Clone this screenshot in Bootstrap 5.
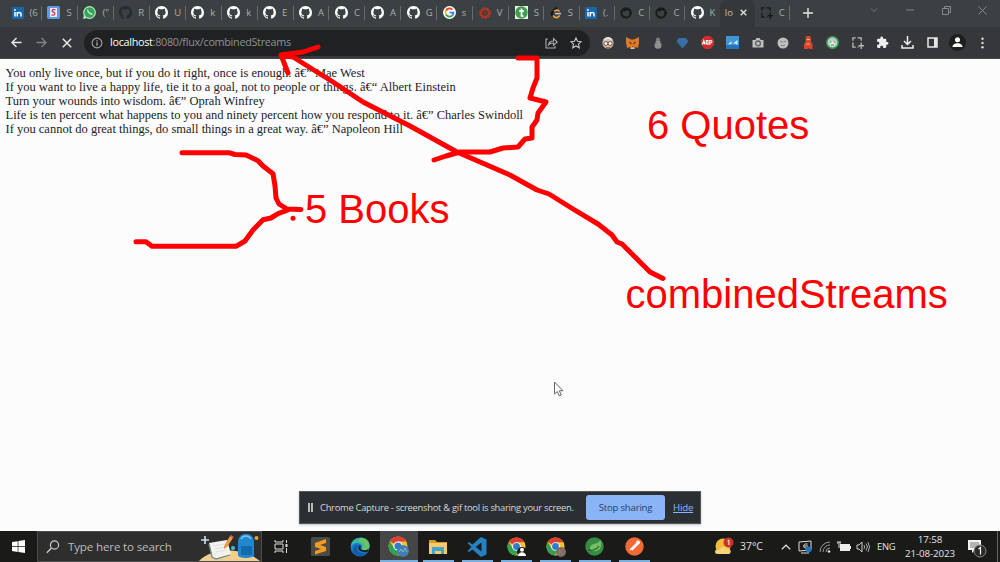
<!DOCTYPE html>
<html lang="en">
<head>
<meta charset="utf-8">
<title>localhost:8080/flux/combinedStreams</title>
<link href="https://cdn.jsdelivr.net/npm/bootstrap@5.3.0/dist/css/bootstrap.min.css" rel="stylesheet">
<script src="https://cdn.jsdelivr.net/npm/bootstrap@5.3.0/dist/js/bootstrap.bundle.min.js"></script>
<style>
body{width:1000px;height:562px;overflow:hidden;background:#fdfcfd;font-family:"Open Sans","Noto Sans",sans-serif;font-size:11px;line-height:1}
svg{display:block;flex:none}
.tabstrip{height:27px;background:#3b4143;color:#a9adae;padding-left:6px}
.btab{width:35.95px;height:27px;padding:0 0 2px 5.5px;gap:6px;font-size:9.5px;line-height:14px;position:relative}
.btab.late{width:35.2px}
.btab::after{content:"";position:absolute;right:0;top:6px;width:1px;height:14px;background:#666b6c}
.btab.plain::after{display:none}
.btab span{white-space:nowrap}
.btab.current{width:35px;background:#35383a;border-radius:7px 7px 0 0;padding-left:4.5px;gap:6px;color:#bbb}
.btab.current span{width:9px}
.winbtns span{width:36px;height:20px}
.toolbar{height:32px;background:#35373a;border-bottom:1px solid #4a4a4b}
.nav3{width:84px;padding-left:4px}
.nav3 span,.exts span{width:25px;height:30px}
.pill{width:506px;height:26px;background:#202122;color:#8e9194;border-radius:13px;padding:0 6px 0 7px}
.pill .url{font-size:10.8px;letter-spacing:-.29px;white-space:nowrap;margin-left:7px}
.exts{padding-left:5px}
.quotes{font-family:"Liberation Serif",serif;font-size:12.5px;line-height:14px;color:#222;padding:7px 0 0 5.5px;height:472px;white-space:nowrap}
.mono-q{width:max-content}
.sharebar{left:299px;top:491px;width:402px;height:33px;background:#2c2f32;border:1px solid #55585a;color:#d5d7d9;padding-left:8px;font-size:9.7px;white-space:nowrap;box-shadow:0 1px 2px #9999}
.sharebar .msg{font-size:9.4px;letter-spacing:-.28px;line-height:14px;margin-left:7px;width:266px}
.sharebar .btn{width:79px;height:25px;background:#8ab4f8;color:#263f66;font-size:9.6px;letter-spacing:-.2px;border-radius:3px;padding:0;line-height:25px}
.sharebar a{color:#8ab4f8;letter-spacing:-.2px}
.taskbar{height:31px;background:#1a1b19;color:#e2e2e2}
.searchbox{width:225px;height:31px;background:#2d2e2d;border:1px solid #4c4d4c;color:#bcbcbc;font-size:11.6px;letter-spacing:-.16px}
.app{width:39.2px;height:31px;position:relative}
.app.run::after{content:"";position:absolute;left:4px;right:4px;bottom:0;height:2px;background:#76afe0}
.app.front{background:#454647;width:38px;margin-right:1px}
.app.front::after{left:0;right:0}
.clock{width:66px;font-size:9.8px;line-height:14px;text-align:center;letter-spacing:-.1px}
.overlay{left:0;top:0;pointer-events:none}
.overlay text{font:40px "Liberation Sans",sans-serif;fill:#f00}
</style>
</head>
<body>
<svg width="0" height="0" class="position-absolute">
<defs>
<symbol id="gh" viewBox="0 0 16 16"><path fill="currentColor" d="M8 0C3.58 0 0 3.58 0 8c0 3.54 2.29 6.53 5.47 7.59.4.07.55-.17.55-.38v-1.49c-2 .37-2.53-.49-2.69-.94-.09-.23-.48-.94-.82-1.13-.28-.15-.68-.52-.01-.53.63-.01 1.08.58 1.23.82.72 1.21 1.87.87 2.33.66.07-.52.28-.87.51-1.07-1.78-.2-3.64-.89-3.64-3.95 0-.87.31-1.59.82-2.15-.08-.2-.36-1.02.08-2.12 0 0 .67-.21 2.2.82a7.6 7.6 0 0 1 4 0c1.53-1.04 2.2-.82 2.2-.82.44 1.1.16 1.92.08 2.12.51.56.82 1.27.82 2.15 0 3.07-1.87 3.75-3.65 3.95.29.25.54.73.54 1.48v2.2c0 .21.15.46.55.38A8 8 0 0 0 16 8c0-4.42-3.58-8-8-8z"/></symbol>
<symbol id="in" viewBox="0 0 12 12"><rect width="12" height="12" rx="1" fill="#1667ae"/><path d="M3 5v4.6M5.3 9.6V5M5.3 7c0-2 3.7-2.2 3.7 0v2.6" stroke="#fff" stroke-width="1.5" fill="none"/><circle cx="3" cy="3" r=".9" fill="#fff"/></symbol>
<symbol id="chrome" viewBox="0 0 20 20"><circle cx="10" cy="10" r="9.5" fill="#f7c52d"/><path d="M10 10 1.8 5.2A9.5 9.5 0 0 1 18.3 5.5H10z" fill="#dd4033"/><path d="M1.8 5.2A9.5 9.5 0 0 0 9.3 19.5L13.7 12 10 10 6 12z" fill="#30a152"/><circle cx="10" cy="10" r="4.6" fill="#fff"/><circle cx="10" cy="10" r="3.6" fill="#2f7ccc"/></symbol>
<symbol id="ring" viewBox="0 0 12 12"><circle cx="6" cy="6" r="4.700" stroke="#1b1e1f" stroke-width="2.200" fill="none"/><path d="M4 4.500A3 3 0 0 1 9 3.500M9 6h3" stroke="#17191a" stroke-width="1.600" fill="none"/></symbol>
<symbol id="crop" viewBox="0 0 13 13"><path d="M1 4V1h3M6 1h2M10 4V1H8M1 6v2M1 8v3h3M6 11h1M10 6v7M7 9.5h6" fill="none" stroke="currentColor" stroke-width="1.4"/></symbol>
</defs>
</svg>

<header>
<div class="tabstrip d-flex">
<div class="btab d-flex align-items-center"><svg width="12" height="12"><use href="#in"/></svg><span>(‌6</span></div>
<div class="btab d-flex align-items-center"><svg width="13" height="13" viewBox="0 0 13 13"><rect width="13" height="13" rx="2" fill="#5b9bdf"/><rect x="3" y="2" width="7" height="9" fill="#e4eefb"/><path d="M8.5 4C5 2.5 4 5.5 6.5 6.2S8 10 4.500 8.800" stroke="#c53f54" stroke-width="1.300" fill="none"/></svg><span>S</span></div>
<div class="btab d-flex align-items-center"><svg width="13" height="13" viewBox="0 0 13 13"><circle cx="6.500" cy="6.500" r="6.400" fill="#bfe2c5"/><path d="m0 13 1-4 3 3z" fill="#bfe2c5"/><circle cx="6.500" cy="6.500" r="5.200" fill="#2fa84f"/><path d="M4 3.500c0 3 2.500 5.500 5.500 5.500V7.500L8 7 5.500 5 5.500 3.500z" fill="#b7d7e2"/></svg><span>("</span></div>
<div class="btab d-flex align-items-center"><svg width="13" height="13" color="#25292b"><use href="#gh"/></svg><span>R</span></div>
<div class="btab d-flex align-items-center"><svg width="13" height="13" color="#fff"><use href="#gh"/></svg><span>U</span></div>
<div class="btab d-flex align-items-center"><svg width="13" height="13" color="#fff"><use href="#gh"/></svg><span>k</span></div>
<div class="btab d-flex align-items-center"><svg width="13" height="13" color="#fff"><use href="#gh"/></svg><span>k</span></div>
<div class="btab d-flex align-items-center"><svg width="13" height="13" color="#fff"><use href="#gh"/></svg><span>E</span></div>
<div class="btab d-flex align-items-center"><svg width="13" height="13" color="#fff"><use href="#gh"/></svg><span>A</span></div>
<div class="btab d-flex align-items-center"><svg width="13" height="13" color="#fff"><use href="#gh"/></svg><span>C</span></div>
<div class="btab d-flex align-items-center"><svg width="13" height="13" color="#fff"><use href="#gh"/></svg><span>A</span></div>
<div class="btab d-flex align-items-center"><svg width="13" height="13" color="#fff"><use href="#gh"/></svg><span>G</span></div>
<div class="btab d-flex align-items-center"><svg width="13" height="13" viewBox="0 0 13 13"><circle cx="6.500" cy="6.500" r="6.500" fill="#fff"/><g fill="none" stroke-width="1.800"><path d="M9.300 3.600A4 4 0 0 0 3 4.500" stroke="#e34133"/><path d="M3 4.500a4 4 0 0 0 0 4" stroke="#f4b71c"/><path d="M3 8.500a4 4 0 0 0 6 1.200" stroke="#31a350"/><path d="M9 9.700a4 4 0 0 0 1.500-3.100h-4" stroke="#3f7eea"/></g></svg><span>s</span></div>
<div class="btab d-flex align-items-center"><svg width="12" height="12" viewBox="0 0 12 12"><circle cx="6" cy="6" r="4" fill="none" stroke="#a93424" stroke-width="2.500"/><circle cx="6" cy="6" r="5.300" fill="none" stroke="#c23d29" stroke-dasharray="2 1.300"/><circle cx="6" cy="6" r="1.500" fill="#7c3026"/></svg><span>V</span></div>
<div class="btab late d-flex align-items-center"><svg width="13" height="13" viewBox="0 0 13 13"><path d="M0 0h13v13H0z" fill="#e9f4ea"/><circle cx="6.500" cy="6.500" r="6.200" fill="#3e9f4d"/><path d="M6.500 2.500v7q0 1 2 .5M4.300 5h4.500" stroke="#fff" stroke-width="1.800" fill="none"/></svg><span>S</span></div>
<div class="btab late d-flex align-items-center"><svg width="12" height="12" viewBox="0 0 12 12"><path d="M7 .5 2 5.500c-1 1-.5 2 1 3.800" stroke="#121314" stroke-width="2" fill="none"/><path d="M4 4.500c2-2 4-1.500 5.500 0M3 8.500c2 3 5 2.500 6.500 0" stroke="#eaa43a" stroke-width="1.700" fill="none"/><path d="M5 6.600h6" stroke="#c5c5c5" stroke-width="1.500"/></svg><span>S</span></div>
<div class="btab late d-flex align-items-center"><svg width="12" height="12"><use href="#in"/></svg><span>(.</span></div>
<div class="btab late d-flex align-items-center"><svg width="12" height="12"><use href="#ring"/></svg><span>C</span></div>
<div class="btab late d-flex align-items-center"><svg width="12" height="12"><use href="#ring"/></svg><span>C</span></div>
<div class="btab late plain d-flex align-items-center"><svg width="13" height="13" color="#fff"><use href="#gh"/></svg><span>K</span></div>
<div class="btab current plain d-flex align-items-center"><span>lo</span><svg width="7" height="7" viewBox="0 0 7 7"><path d="m.7.7 5.600 5.600M6.300.7.700 6.300" stroke="#ddd" stroke-width="1.400"/></svg></div>
<div class="btab late d-flex align-items-center"><svg width="12" height="12" color="#171a1b"><use href="#crop"/></svg><span>C</span></div>
<div class="d-flex align-items-center justify-content-center" style="width:36px;padding-bottom:1px"><svg width="10" height="10" viewBox="0 0 10 10"><path d="M5 0v10M0 5h10" stroke="#e6e6e6" stroke-width="1.400"/></svg></div>
<div class="winbtns d-flex ms-auto">
<span class="d-flex align-items-center justify-content-center"><svg width="8" height="5" viewBox="0 0 8 5"><path d="m1 .5 3 3 3-3" stroke="#6f7577" fill="none"/></svg></span>
<span class="d-flex align-items-center justify-content-center"><svg width="8" height="2"><path d="M0 1h8" stroke="#7f8587"/></svg></span>
<span class="d-flex align-items-center justify-content-center"><svg width="9" height="9" viewBox="0 0 9 9"><path d="M.5 2.500h6v6h-6zM2.500 2V.5h6v6H7" stroke="#858b8d" fill="none"/></svg></span>
<span class="d-flex align-items-center justify-content-center"><svg width="9" height="9" viewBox="0 0 9 9"><path d="m.5.5 8 8M8.500.5l-8 8" stroke="#858b8d"/></svg></span>
</div>
</div>

<div class="toolbar d-flex align-items-center">
<div class="nav3 d-flex">
<span class="d-flex align-items-center justify-content-center"><svg width="11" height="11" viewBox="0 0 11 11"><path d="M10.500 5.500H1M5.500 1 1 5.500 5.500 10" stroke="#e8eaeb" stroke-width="1.400" fill="none"/></svg></span>
<span class="d-flex align-items-center justify-content-center"><svg width="11" height="11" viewBox="0 0 11 11"><path d="M.5 5.500H10M5.500 1 10 5.500 5.500 10" stroke="#808486" stroke-width="1.300" fill="none"/></svg></span>
<span class="d-flex align-items-center justify-content-center"><svg width="10" height="10" viewBox="0 0 10 10"><path d="m.8.8 8.400 8.400M9.200.8.800 9.200" stroke="#e8eaeb" stroke-width="1.500"/></svg></span>
</div>
<div class="pill d-flex align-items-center">
<svg width="12" height="12" viewBox="0 0 12 12"><circle cx="6" cy="6" r="4.900" fill="none" stroke="#a4a6a8" stroke-width="1.100"/><path d="M6 5.300v3.400M6 3.200v1.300" stroke="#b4b6b8" stroke-width="1.200"/></svg>
<span class="url"><span class="text-white">localhost</span>:8080/flux/combinedStreams</span>
<svg class="ms-auto" width="13" height="12" viewBox="0 0 13 12"><path d="M3 2H1v9h9V9M3.500 8c.4-3 2.500-4 5-4V1.500L12.200 5 8.500 8.200V6c-2 0-3.600.4-5 2z" stroke="#a9abad" stroke-width="1.100" fill="none"/></svg>
<svg style="margin:0 2px 0 12px" width="12" height="12" viewBox="0 0 12 12"><path d="m6 .9 1.500 3.300 3.700.4-2.700 2.500.8 3.700L6 8.900l-3.300 1.900.8-3.700L.8 4.600l3.700-.4z" stroke="#c5c7c9" stroke-width="1.100" fill="none"/></svg>
</div>
<div class="exts d-flex">
<span class="d-flex align-items-center justify-content-center"><svg width="12" height="12" viewBox="0 0 12 12"><circle cx="6" cy="6" r="5.600" fill="#c9bda9"/><path d="M2 3Q6-1 10 3" stroke="#e9e4da" stroke-width="2" fill="none"/><circle cx="3.800" cy="6.500" r="2" fill="#eee" stroke="#655c53"/><circle cx="8.200" cy="6.500" r="2" fill="#eee" stroke="#655c53"/><path d="M4 10.500h4" stroke="#c95a3c"/></svg></span>
<span class="d-flex align-items-center justify-content-center"><svg width="13" height="12" viewBox="0 0 13 12"><path d="m0 0 5 2.500h3L13 0v6l-1 5-3-1-1 1.500H5L4 10l-3 1-1-5z" fill="#dd7a25"/><path d="m3.500 5 2 2M9.500 5l-2 2M6 9.500h1" stroke="#733a16" stroke-width="1.200"/><path d="M4.500 10.500h4v1.500h-4z" fill="#d6c6b7"/></svg></span>
<span class="d-flex align-items-center justify-content-center"><svg width="8" height="12" viewBox="0 0 8 12"><circle cx="4" cy="2.700" r="2.200" fill="#777a7b"/><path d="M1.500 4.500h5v1h-5z" fill="#c7c7c7"/><ellipse cx="4" cy="8.500" rx="3.500" ry="3.200" fill="#8e9192"/></svg></span>
<span class="d-flex align-items-center justify-content-center"><svg width="13" height="12" viewBox="0 0 13 12"><path d="M2.500 1h7.500l2.500 3.500-6 7-6-7z" fill="#366fa5"/></svg></span>
<span class="d-flex align-items-center justify-content-center"><svg width="13" height="13" viewBox="0 0 13 13"><path d="M4 0h5l4 4v5l-4 4H4L0 9V4z" fill="#d5292d"/><path d="m1.500 8.500 1.300-4 1.300 4M2 7.200h1.800M5.300 8V4.500H7v3.700H5.300M8.700 9V4.500q2.500-.2 2.200 1.300t-2.200 1" stroke="#fff" stroke-width="1.100" fill="none"/></svg></span>
<span class="d-flex align-items-center justify-content-center"><svg width="13" height="13" viewBox="0 0 13 13"><rect width="13" height="13" fill="#3f96d6"/><path d="M0 9h13v4H0z" fill="#2774b8"/><path d="M2 8.500 5.500 5v3zM7 7.500 11.500 4v5L9 7.500z" fill="#d8edf9"/></svg></span>
<span class="d-flex align-items-center justify-content-center"><svg width="12" height="11" viewBox="0 0 12 11"><path d="M.5 3h2.800L4.500 1h3l1.200 2h2.800v7.500H.5z" fill="#bdbfc0"/><circle cx="6" cy="6.400" r="2.400" fill="none" stroke="#5b5d5e" stroke-width="1.300"/></svg></span>
<span class="d-flex align-items-center justify-content-center"><svg width="12" height="12" viewBox="0 0 12 12"><circle cx="6" cy="6" r="5.500" fill="#bcbebf"/><path d="m3 4 2.500 1M9 4 6.500 5M4 8.500h4" stroke="#7e8182"/></svg></span>
<span class="d-flex align-items-center justify-content-center"><svg width="10" height="13" viewBox="0 0 10 13"><path d="M3 0h4l1 2v4l1.500 2v5H7L6 12l-1 1H1V8l1.500-2V2z" fill="#d8472b"/><path d="M3.800 3.500h2.800M3.500 8h3.200" stroke="#f5bb9d"/></svg></span>
<span class="d-flex align-items-center justify-content-center"><svg width="13" height="13" viewBox="0 0 13 13"><circle cx="6.500" cy="6.500" r="5.700" fill="#b9cfc2" stroke="#37a353" stroke-width="1.500"/><path d="M4 5h5v4l-2.500 2L4 9z" fill="#e6ebe8"/><path d="M4 6h1.500M7.500 6H9M5 9h3" stroke="#4a6f5b"/></svg></span>
<span class="d-flex align-items-center justify-content-center"><svg width="12" height="12" color="#b7babb"><use href="#crop"/></svg></span>
<span class="d-flex align-items-center justify-content-center"><svg width="13" height="13" viewBox="0 0 24 24"><path fill="#eee" d="M20.500 11H19V7a2 2 0 0 0-2-2h-4V3.500a2.500 2.500 0 0 0-5 0V5H4a2 2 0 0 0-2 2v3.800h1.500a2.700 2.700 0 0 1 0 5.400H2V20c0 1.100.9 2 2 2h3.800v-1.500a2.700 2.700 0 0 1 5.400 0V22H17a2 2 0 0 0 2-2v-4h1.500a2.500 2.500 0 0 0 0-5z"/></svg></span>
<span class="d-flex align-items-center justify-content-center"><svg width="13" height="13" viewBox="0 0 13 13"><path d="M6.500 0v8M3 5l3.500 3.500L10 5M1 9v3h11V9" stroke="#eee" stroke-width="1.500" fill="none"/></svg></span>
<span class="d-flex align-items-center justify-content-center"><svg width="11" height="11" viewBox="0 0 11 11"><path d="M1 1h9v9H1z" stroke="#e7e7e7" stroke-width="1.500" fill="none"/><path d="M7 1h3v9H7z" fill="#e7e7e7"/></svg></span>
<span class="d-flex align-items-center justify-content-center"><svg width="17" height="17" viewBox="0 0 17 17"><circle cx="8.500" cy="8.500" r="8.500" fill="#1d1e1f"/><circle cx="8.500" cy="5.800" r="2.500" fill="#fff"/><path d="M3.500 13c0-5 10-5 10 0z" fill="#fff"/></svg></span>
<span class="d-flex align-items-center justify-content-center"><svg width="3" height="12" viewBox="0 0 3 12" fill="#dcdcdc"><circle cx="1.500" cy="1.700" r="1.200"/><circle cx="1.500" cy="6" r="1.200"/><circle cx="1.500" cy="10.300" r="1.200"/></svg></span>
</div>
</div>
</header>

<main class="quotes">
<div class="mono-q">You only live once, but if you do it right, once is enough. â€” Mae West</div>
<div class="mono-q">If you want to live a happy life, tie it to a goal, not to people or things. â€“ Albert Einstein</div>
<div class="mono-q">Turn your wounds into wisdom. â€” Oprah Winfrey</div>
<div class="mono-q">Life is ten percent what happens to you and ninety percent how you respond to it. â€” Charles Swindoll</div>
<div class="mono-q">If you cannot do great things, do small things in a great way. â€” Napoleon Hill</div>
</main>

<footer class="taskbar d-flex">
<div class="d-flex align-items-center justify-content-center" style="width:37px"><svg width="13" height="13" viewBox="0 0 13 13"><path fill="#fff" d="m0 2 5.700-.8v5H0zm6.400-.9L13 0v6.200H6.400zM0 6.900h5.700v5L0 11zm6.400 0H13V13l-6.600-1z"/></svg></div>
<div class="searchbox d-flex align-items-center">
<svg class="ms-2" width="14" height="14" viewBox="0 0 14 14"><circle cx="8.500" cy="5" r="4.100" stroke="#ccc" stroke-width="1.200" fill="none"/><path d="M5.500 8 .8 12.700" stroke="#ccc" stroke-width="1.300"/></svg>
<span style="margin-left:8px">Type here to search</span>
<svg class="ms-auto" width="62" height="29" viewBox="0 0 62 29"><path d="M0 29C13 15 44 15 61 29z" fill="#efcf8f"/><path d="m10 11 18-3 4 14-18 5z" fill="#f3f3ee"/><path d="m10 12 3 13 4 2 14-4" stroke="#6b8c8c" stroke-width="1.300" fill="none"/><path d="m14 14 12-2M15 17l12-2M16 20l12-2" stroke="#dde2e1"/><path d="m25 14 6-10 3 2-6 9-3 2z" fill="#ea9a43"/><path d="m31 4 1-1 3 2-1 1z" fill="#df5c6c"/><path d="M6 4v8M2 8h8" stroke="#cfdae2" stroke-width="1.700"/><path d="M39 10c0-11 16-11 16 0v13c0 4-16 4-16 0z" fill="#2187cf"/><path d="M42 14h11v9H42z" fill="#146baa"/><path d="M42 7c2-4 8-4 10 0" stroke="#74c4ee" stroke-width="1.600" fill="none"/><circle cx="57.500" cy="6" r="2" fill="#e9a331"/><circle cx="34" cy="16" r="2" fill="#46bfbd"/></svg>
</div>
<div class="app d-flex align-items-center justify-content-center" style="padding-right:2px"><svg width="14" height="13" viewBox="0 0 14 13"><path d="M1 0v2h8V0M1 13v-2h8v2M1 4h8v5H1zM12.500 0v3M12.500 8v5" stroke="#ddd" fill="none"/><path d="M11.500 4h2v3h-2z" fill="#ddd"/></svg></div>
<div class="app d-flex align-items-center justify-content-center"><svg width="19" height="19" viewBox="0 0 19 19"><rect width="19" height="19" rx="1.500" fill="#4a4a49"/><path d="m4 6 11-4v4L9 8l6 2v4L4 17.500V14l6-2-6-2z" fill="#f29a22"/></svg></div>
<div class="app d-flex align-items-center justify-content-center"><svg width="20" height="20" viewBox="0 0 20 20"><circle cx="10" cy="10" r="9.500" fill="#1479c6"/><path d="M1 10C1-2 20-2 19.500 9c0 4-4 5-7 4-2-.7.300-2-.500-4C10 5 3 5 1 10z" fill="#36bba1"/><path d="M11 .8C17 1 20 6 19.500 9c-.5 4-4 5-7 4l-.5-2c4-2 1-7-4-6z" fill="#69c366"/><path d="M7 10c-1 5 4 8 10 5-3 5-10 5-13 1-2-4 0-8 5-8z" fill="#1759a2"/><path d="M10.500 9c-3 2 0 6 6 5l2-.8" stroke="#1a1b19" stroke-width="1.800" fill="none"/></svg></div>
<div class="app run front d-flex align-items-center justify-content-center"><svg width="21" height="21" viewBox="0 0 21 21"><use href="#chrome" width="20" height="20"/><circle cx="15" cy="15" r="6" fill="#407fae"/><path d="m11 16 2-3 2 3 2-4 2 4" stroke="#8db5d1" fill="none"/></svg></div>
<div class="app run d-flex align-items-center justify-content-center"><svg width="18" height="16" viewBox="0 0 18 16"><path d="M0 1h6l2 2h10v12H0z" fill="#d99b2c"/><path d="M0 4h18v11H0z" fill="#f4cc6a"/><path d="M3 15V8h12v7h-3v-3H6v3z" fill="#46a5ce"/></svg></div>
<div class="app run d-flex align-items-center justify-content-center"><svg width="20" height="20" viewBox="0 0 20 20"><path d="M14 0 5.500 7.600 2 5 .5 6l4 4-4 4L2 15l3.500-2.600L14 20l5.500-2.500v-15z" fill="#2481c2"/><path d="M14.500 5.500v9L8.700 10z" fill="#1a1b19"/></svg></div>
<div class="app run d-flex align-items-center justify-content-center"><svg width="20" height="20" viewBox="0 0 20 20"><use href="#chrome" width="19" height="19"/><circle cx="15" cy="15" r="5" fill="#17191a"/><circle cx="15" cy="12.800" r="2" fill="#fff"/><path d="M11 19c0-5 8-5 8 0z" fill="#fff"/></svg></div>
<div class="app run d-flex align-items-center justify-content-center"><svg width="20" height="20" viewBox="0 0 20 20"><use href="#chrome" width="19" height="19"/><circle cx="15" cy="15" r="5" fill="#776f6b"/><path d="M13.500 12v6M17 12l-3 3 3 3" stroke="#d4614e" fill="none"/></svg></div>
<div class="app run d-flex align-items-center justify-content-center"><svg width="19" height="19" viewBox="0 0 19 19"><circle cx="9.500" cy="9.500" r="9.200" fill="#368d42"/><path d="M15.500 3c2 8-1 12-8 11-4-1-3-6 1-7 3-.5 5-1 7-4z" fill="#75bd67"/><path d="M3 13c5 1 9-1 11-4" stroke="#24632f" stroke-width="1.300" fill="none"/></svg></div>
<div class="app run d-flex align-items-center justify-content-center"><svg width="19" height="19" viewBox="0 0 19 19"><circle cx="9.500" cy="9.500" r="9.200" fill="#f26936"/><path d="m5 13 7-7M7 13l6-6" stroke="#fff" stroke-width="1.400"/><circle cx="13" cy="5.500" r="2" fill="#fff"/></svg></div>
<div class="tray d-flex align-items-center ms-auto">
<svg width="20" height="20" viewBox="0 0 20 20"><circle cx="9" cy="9" r="7.500" fill="#f3bc3c"/><path d="M1 15c0-3 3-3 4-2 2-4 7-4 8-1 4-1 5 4 2 5H4c-2 0-3-1-3-2z" fill="#f5d377"/><circle cx="14.500" cy="5.500" r="5" fill="#cc3326"/><path d="m13.500 4 1.400-1v5" stroke="#fff" fill="none"/></svg>
<div style="width:41px;padding-left:6px;font-size:10.400px">37°C</div>
<svg style="margin-left:6px" width="10" height="6" viewBox="0 0 10 6"><path d="m.8 5.200 4.200-4 4.200 4" stroke="#ddd" stroke-width="1.200" fill="none"/></svg>
<svg style="margin-left:7px" width="15" height="14" viewBox="0 0 15 14"><path d="m1 2 12-1v9L1 11zM3 13h8" stroke="#ddd" fill="none"/><path d="M9.500 4C5 3 4 8 8 8M6 6h4" stroke="#ddd" fill="none"/><circle cx="10.500" cy="9.500" r="3" fill="#1e78cb"/></svg>
<svg style="margin-left:6px" width="12" height="12" viewBox="0 0 12 12"><g stroke="#999" fill="none"><path d="M1 11A10 10 0 0 1 11 1M4 11a7 7 0 0 1 7-7M7 11a4 4 0 0 1 4-4"/></g><circle cx="10" cy="10.500" r="1.200" fill="#eee"/></svg>
<svg style="margin-left:6px" width="14" height="11" viewBox="0 0 14 11"><path d="M3 3h10v7H3z" fill="#eee"/><path d="M0 2h4M1 0v2M3 0v2M2 3v4" stroke="#ddd"/><path d="M13 5h1v3h-1z" fill="#eee"/></svg>
<svg style="margin-left:5px" width="14" height="12" viewBox="0 0 14 12"><path d="M1 4h2l3-3v10L3 8H1z" stroke="#ccc" fill="none"/><path d="M8 4q1.500 2 0 4M10 2.500q3 3.500 0 7M12 1q3 5 0 10" stroke="#aaa" fill="none"/></svg>
<div style="padding-left:7px;width:27px;font-size:9.400px;letter-spacing:-.2px">ENG</div>
<div class="clock">17:58<br>21-08-2023</div>
<svg style="margin:3px 10px 0 4px" width="20" height="19" viewBox="0 0 20 19"><path d="M1 1h13v10H8l-3 3v-3H1z" fill="#f3f3f3"/><path d="M3 4h9M3 6h9M3 8h7" stroke="#555" stroke-width=".8"/><circle cx="13" cy="12" r="6" fill="#292a29" stroke="#888"/><path d="m11.500 10 2-1.500v7" stroke="#fff" stroke-width="1.200" fill="none"/></svg>
<div style="width:1px;height:31px;background:#666;margin-right:2px"></div>
</div>
</footer>

<div class="sharebar position-absolute d-flex align-items-center">
<svg width="5" height="9"><path d="M1 0v9M4 0v9" stroke="#e8e8e8" stroke-width="1.500"/></svg>
<span class="msg">Chrome Capture - screenshot &amp; gif tool is sharing your screen.</span>
<button class="btn border-0">Stop sharing</button>
<a href="#" style="margin-left:8px">Hide</a>
</div>

<svg class="overlay position-absolute" width="1000" height="562" viewBox="0 0 1000 562">
<g fill="none" stroke="#f00" stroke-width="5" stroke-linecap="round" stroke-linejoin="round">
<path d="M518 58H537V78L533 88L530 98L546 102L538 113L537 120L532 127V138L525 139L518 147L503 148L490 152H460L446 156L434 160"/>
<path d="M318 47L303 52L281 55L288 73M281 55L293 57L333 82L363 102L410 126L457 152L510 175L537 190L549 194L573 209L598 224L612 235L617 242L622 244L650 272L663 278.500"/>
<path d="M182 152.700H229L235 154.500L246 155L258 160.700L263 166L273 173.700L275 186L276 198L279 204L287 209L301 209.500"/>
<path d="M136 241.700H146L152 246.300H236L245 241L253 230L263 219.700L271 218L278 213.700L288 210"/>
</g>
<circle cx="293" cy="218.300" r="2.500" fill="#f00"/>
<text x="647" y="138.500">6 Quotes</text>
<text x="305" y="223">5 Books</text>
<text x="625.500" y="307.500">combinedStreams</text>
<path d="M554.500 382v12l2.800-2.500 2 4.500 2-1-2-4.300h3.700z" fill="#fff" stroke="#666"/>
</svg>
</body>
</html>
